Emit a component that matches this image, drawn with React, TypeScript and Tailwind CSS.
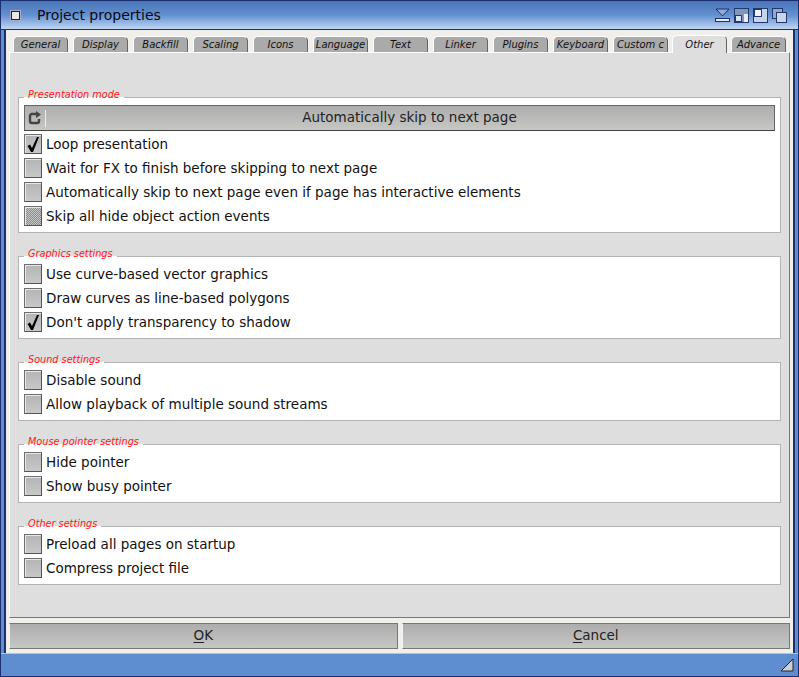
import { ReactNode } from 'react';

const tabs = ['General', 'Display', 'Backfill', 'Scaling', 'Icons', 'Language', 'Text', 'Linker', 'Plugins', 'Keyboard', 'Custom c', 'Other', 'Advance'];

const font = { fontFamily: '"DejaVu Sans", sans-serif' };

const Tab = ({ label }: { label: string }) => {
  const active = label === 'Other';
  return (
    <div
      className={`flex w-[55px] items-center justify-center rounded-t-[5px] border-t border-l border-r border-t-white border-l-white border-r-[#666] text-[10px] italic text-[#111] overflow-hidden whitespace-nowrap ${
        active ? 'h-[18px] -mb-px -ml-px z-10 bg-[#dedede]' : 'h-[16px] bg-[#aaaaaa]'
      } ${label === 'Advance' ? '-ml-px' : ''}`}
    >
      {label}
    </div>
  );
};

const Check = ({ checked, dotted }: { checked?: boolean; dotted?: boolean }) => (
  <div
    className={`flex h-[20px] w-[18px] shrink-0 items-center justify-center border border-[#6e6e6e] border-r-[#555] border-b-[#555] shadow-[inset_1px_1px_0_#e8e8e8] ${
      dotted
        ? 'bg-[repeating-conic-gradient(#8a8a8a_0_25%,#c8c8c8_0_50%)] bg-size-[2px_2px]'
        : 'bg-linear-to-b from-[#b4b4b4] to-[#c8c8c8]'
    }`}
  >
    {checked && (
      <svg width="14" height="17" viewBox="0 0 14 17">
        <path d="M1.5 10 L4 8.5 L6 12 L11 1 L13 1 L7 16 L5 16 Z" fill="#000" />
      </svg>
    )}
  </div>
);

const Row = ({ label, checked, dotted }: { label: string; checked?: boolean; dotted?: boolean }) => (
  <div className="flex h-[24px] items-center gap-[4px] text-[13.5px] text-[#111]">
    <Check checked={checked} dotted={dotted} />
    <span>{label}</span>
  </div>
);

const Group = ({ title, children }: { title: string; children: ReactNode }) => (
  <fieldset className="mx-[8px] border border-[#b4b4b4] bg-white px-[5px] pb-[4px]">
    <legend className="relative -top-[2px] ml-0 px-[4px] text-[9.7px] leading-[12px] italic text-[#ff1a1a]">{title}</legend>
    {children}
  </fieldset>
);

const WindowButton = ({ children }: { children: ReactNode }) => (
  <div className="flex h-[26px] flex-1 items-center justify-center border border-[#777] border-l-[#f4f4f4] bg-linear-to-b from-[#adadad] to-[#c6c8c4] pb-[2px] text-[13.5px] text-[#222]">
    {children}
  </div>
);

export default function App() {
  return (
    <div style={font} className="flex h-[677px] w-[799px] flex-col overflow-hidden border border-[#1c2f6e] bg-[#5f8ed0]">
      {/* title bar */}
      <div className="flex h-[29px] shrink-0 items-center border-b border-[#1c2f6e] bg-linear-to-b from-[#4a74b8] via-[#6290d0] to-[#c0d6f2] pr-[11px] pl-[10px]">
        <div className="h-[9px] w-[9px] border border-[#222] bg-[#e8e8e8] shadow-[0_0_0_1px_#aac]" />
        <span className="ml-[17px] text-[14px] text-[#0a0a14]">Project properties</span>
        <div className="ml-auto flex items-center gap-[4px]">
          <svg width="15" height="14" viewBox="0 0 15 14">
            <path d="M1 1 H14 L7.5 8 Z" fill="#8fabd6" stroke="#1c2f6e" />
            <rect x="0.5" y="10.5" width="14" height="3" fill="#e8eef8" stroke="#1c2f6e" />
          </svg>
          <svg width="15" height="15" viewBox="0 0 15 15">
            <rect x="0.5" y="0.5" width="14" height="14" fill="#e6ecf6" stroke="#24386f" />
            <rect x="1" y="1" width="9" height="13" fill="#7f97bd" />
            <rect x="1" y="1" width="13" height="5" fill="#7f97bd" />
            <rect x="1.5" y="7.5" width="6" height="6" fill="#d8e2f0" stroke="#24386f" />
          </svg>
          <svg width="15" height="15" viewBox="0 0 15 15">
            <rect x="0.5" y="0.5" width="14" height="14" fill="#c6d4e9" stroke="#24386f" />
            <rect x="1.5" y="1.5" width="7" height="7" fill="#f0f4fa" stroke="#24386f" />
          </svg>
          <svg width="15" height="15" viewBox="0 0 15 15">
            <rect x="0.5" y="0.5" width="10" height="10" fill="#8fa8cc" stroke="#24386f" />
            <rect x="4.5" y="4.5" width="10" height="10" fill="#c8d6ea" stroke="#24386f" />
          </svg>
        </div>
      </div>

      {/* body */}
      <div className="mx-[3px] flex h-[623px] shrink-0 flex-col border-x-[2px] border-[#1c2f6e] bg-[#f1efeb] px-[3px] pt-[5px]">
        <div className="flex items-end gap-[5px] pl-[4px]">
          {tabs.map((t) => (
            <Tab key={t} label={t} />
          ))}
        </div>
        <div className="flex h-[566px] flex-col gap-[17px] border border-[#777] border-t-white border-l-white bg-[#dedede] pt-[38px]">
          <Group title="Presentation mode">
            <div className="mt-[2px] mb-[1px] flex h-[26px] items-center border border-[#666] border-b-[#444] bg-linear-to-b from-[#adadad] to-[#c6c8c4] text-[13.5px] text-[#222]">
              <div className="flex h-[17px] w-[21px] items-center justify-center border-r border-[#eee]">
                <svg width="14" height="14" viewBox="0 0 14 14" fill="none">
                  <path d="M8 3 H4 Q2 3 2 5 V10 Q2 12 4 12 H9 Q11 12 11 10 V8" stroke="#444" strokeWidth="2.4" />
                  <path d="M8 0 L13 3.5 L8 7 Z" fill="#444" />
                </svg>
              </div>
              <span className="flex-1 pr-[1px] pb-[2px] text-center">Automatically skip to next page</span>
            </div>
            <Row label="Loop presentation" checked />
            <Row label="Wait for FX to finish before skipping to next page" />
            <Row label="Automatically skip to next page even if page has interactive elements" />
            <Row label="Skip all hide object action events" dotted />
          </Group>
          <Group title="Graphics settings">
            <Row label="Use curve-based vector graphics" />
            <Row label="Draw curves as line-based polygons" />
            <Row label="Don't apply transparency to shadow" checked />
          </Group>
          <Group title="Sound settings">
            <Row label="Disable sound" />
            <Row label="Allow playback of multiple sound streams" />
          </Group>
          <Group title="Mouse pointer settings">
            <Row label="Hide pointer" />
            <Row label="Show busy pointer" />
          </Group>
          <Group title="Other settings">
            <Row label="Preload all pages on startup" />
            <Row label="Compress project file" />
          </Group>
        </div>
        <div className="mt-[5px] flex gap-[4px]">
          <WindowButton>
            <span className="underline underline-offset-2">O</span>K
          </WindowButton>
          <WindowButton>
            <span className="underline underline-offset-2">C</span>ancel
          </WindowButton>
        </div>
      </div>

      {/* bottom bar */}
      <div className="flex flex-1 items-center justify-end border-t border-[#a8c4ec] bg-[#5f8ed0] pr-[4px]">
        <svg width="14" height="14" viewBox="0 0 14 14">
          <path d="M1 13 L13 1 V13 Z" fill="#c8d0da" stroke="#222" />
        </svg>
      </div>
    </div>
  );
}
